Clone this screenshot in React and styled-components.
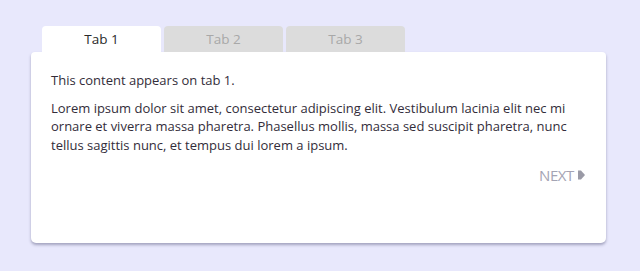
import React, { useState } from 'react'
import styled, { createGlobalStyle } from 'styled-components'

const Global = createGlobalStyle`
  html, body {
    margin: 0;
    background: #e8e8fc;
  }
  body {
    font-family: "Open Sans", "Noto Sans", sans-serif;
  }
`

const tabs = ['Tab 1', 'Tab 2', 'Tab 3']

export default function App() {
  const [active, setActive] = useState(0)

  return (
    <Page>
      <Global />
      <TabBar>
        {tabs.map((t, i) => (
          <Tab key={t} $active={i === active} onClick={() => setActive(i)}>
            {t}
          </Tab>
        ))}
      </TabBar>
      <Card>
        <Text>This content appears on tab {active + 1}.</Text>
        <Text>
          Lorem ipsum dolor sit amet, consectetur adipiscing elit. Vestibulum lacinia elit nec mi
          ornare et viverra massa pharetra. Phasellus mollis, massa sed suscipit pharetra, nunc
          tellus sagittis nunc, et tempus dui lorem a ipsum.
        </Text>
        <Footer>
          <Next onClick={() => setActive((active + 1) % tabs.length)}>
            NEXT
            <svg width="7" height="10" viewBox="0 0 7 10">
              <path d="M0 0.5 H3 L7 5 L3 9.5 H0 Z" fill="#9a9aa6" />
            </svg>
          </Next>
        </Footer>
      </Card>
    </Page>
  )
}

const Page = styled.div`
  padding: 26px 34px 28px 31px;
`

const TabBar = styled.div`
  display: flex;
  gap: 3px;
  padding-left: 11px;
`

const Tab = styled.div`
  width: 119px;
  height: 26px;
  line-height: 27px;
  text-align: center;
  font-size: 13.5px;
  border-radius: 4px 4px 0 0;
  background: ${p => (p.$active ? '#fff' : '#dcdcdc')};
  color: ${p => (p.$active ? '#2a2a2a' : '#a8a8a8')};
  cursor: pointer;
`

const Card = styled.div`
  background: #fff;
  border-radius: 4px 4px 5px 5px;
  box-shadow: 0 2px 3px rgba(60, 60, 100, 0.4);
  min-height: 191px;
  box-sizing: border-box;
  padding: 19px 20px 20px 20px;
`

const Text = styled.p`
  margin: 0 0 9px;
  font-size: 13px;
  line-height: 18.5px;
  color: #332d3a;
`

const Footer = styled.div`
  display: flex;
  justify-content: flex-end;
  padding-top: 2px;
`

const Next = styled.span`
  display: flex;
  align-items: center;
  gap: 4px;
  margin-right: 1px;
  font-size: 15px;
  color: #a4a4b4;
  letter-spacing: -0.4px;
  cursor: pointer;
`
